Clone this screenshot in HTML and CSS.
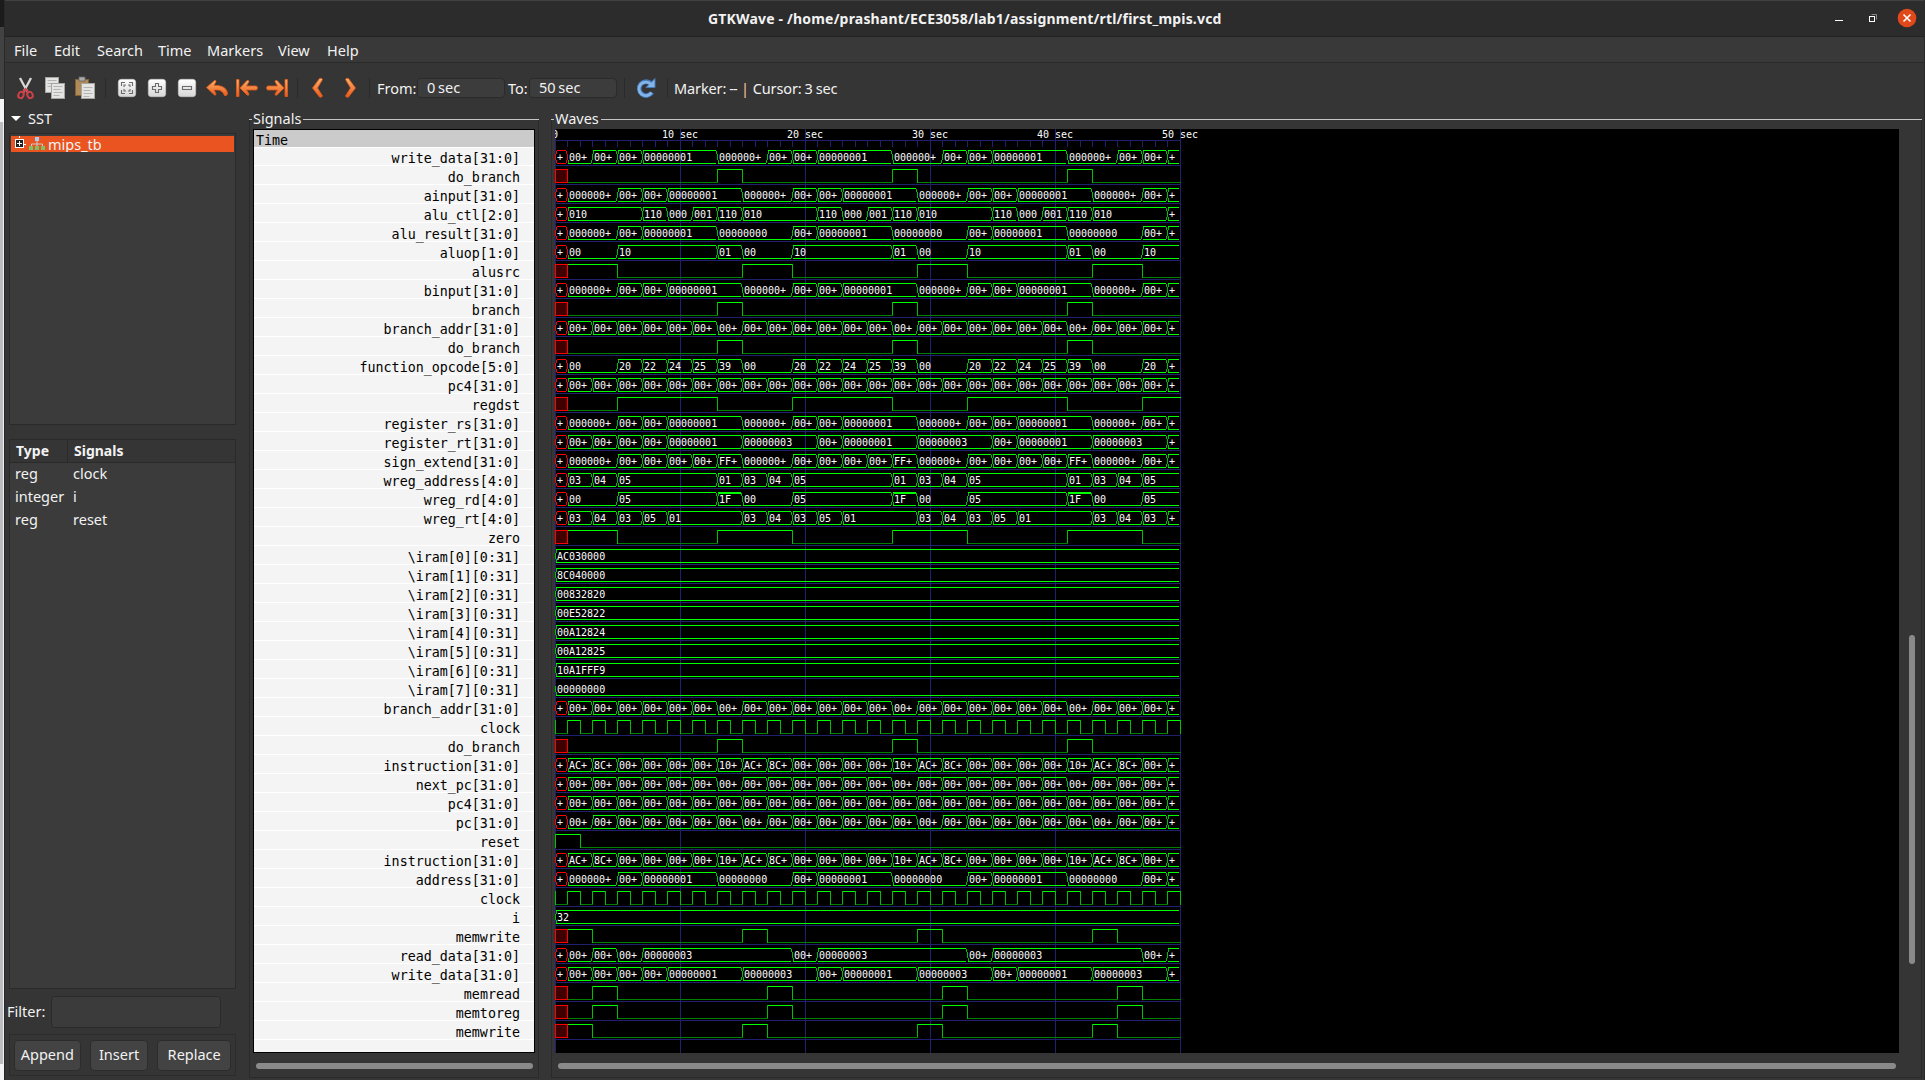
FILE: index.html
```html
<!DOCTYPE html>
<html lang="en">
<head>
<meta charset="utf-8">
<title>GTKWave</title>
<link rel="stylesheet" href="styles.css">
</head>
<body>
<div class="desktop-edge"><i class="edge-dark"></i><i class="edge-mid"></i><i class="edge-light"></i><i class="edge-grey"></i><i class="edge-light edge-end"></i></div>
<div class="window">
  <header class="titlebar">
    <h1>GTKWave - /home/prashant/ECE3058/lab1/assignment/rtl/first_mpis.vcd</h1>
    <svg class="controls" width="100" height="36" viewBox="0 0 100 36">
      <path d="M10 19.5h8" stroke="#fff"/>
      <path d="M46.500 13.500h5v5" fill="none" stroke="#888"/>
      <rect x="44.500" y="15.500" width="5" height="5" fill="none" stroke="#fff"/>
      <circle cx="82" cy="17" r="9.300" fill="#e2491a"/>
      <path d="M78.500 13.500l7 7m0-7l-7 7" stroke="#fff" stroke-width="1.600"/>
    </svg>
  </header>
  <nav class="menubar"><span class="m1">File</span><span class="m2">Edit</span><span class="m3">Search</span><span class="m4">Time</span><span class="m5">Markers</span><span class="m6">View</span><span class="m7">Help</span></nav>
  <div class="toolbar">
    <svg class="icons" width="360" height="30" viewBox="5 73 360 30">
      <defs>
        <linearGradient id="amber" x1="0" y1="0" x2="0" y2="1"><stop offset="0" stop-color="#fbb26a"/><stop offset="1" stop-color="#ea5a1c"/></linearGradient>
        <linearGradient id="paper" x1="0" y1="0" x2="0" y2="1"><stop offset="0" stop-color="#fff"/><stop offset="1" stop-color="#d6d6d6"/></linearGradient>
      </defs>
      <path d="M20 78l7.500 14M31 78l-7.500 14" stroke="#d8d8d4" stroke-width="2.300"/>
      <g fill="none" stroke="#cf4048" stroke-width="2"><ellipse cx="21" cy="95" rx="2.600" ry="3.200" transform="rotate(25 21 95)"/><ellipse cx="30" cy="95" rx="2.600" ry="3.200" transform="rotate(-25 30 95)"/><path d="M23 92l2.500-3 2.500 3"/></g>
      <g fill="#e4e4e2" stroke="#a5a5a1"><rect x="45.500" y="77.500" width="13" height="15"/><path d="M47.500 80.500h9m-9 3h8m-8 3h4" stroke="#b4b4b0"/><rect x="51.500" y="83.500" width="13" height="15"/><path d="M53.500 86.500h9m-9 3h7m-7 3h9m-9 3h6" stroke="#b4b4b0"/></g>
      <rect x="75.500" y="79.500" width="13" height="16" fill="#b08a58" stroke="#806030"/><rect x="79" y="77" width="6" height="4" fill="#aaa" stroke="#666" stroke-width=".8"/>
      <rect x="81.500" y="83.500" width="13" height="15" fill="#e4e4e2" stroke="#a5a5a1"/><path d="M83.500 87.500h9m-9 3h7m-7 3h9m-9 3h6" stroke="#b4b4b0"/>
      <path d="M105.500 78v20M297.500 78v20" stroke="#2a2a2a"/>
      <g fill="url(#paper)" stroke="#c8c8c8" stroke-width=".6"><rect x="118.300" y="79.300" width="17.400" height="17.400" rx="3"/><rect x="148.300" y="79.300" width="17.400" height="17.400" rx="3"/><rect x="178.300" y="79.300" width="17.400" height="17.400" rx="3"/></g>
      <g fill="none" stroke="#6c6c68" stroke-width="1.100">
        <path d="M121.500 86v-3.500h3.500M129 82.500h3.500v3.500M132.500 90v3.500h-3.500M125 93.500h-3.500v-3.500M124 87v-2h2M128 85h2v2M130 89v2h-2M126 91h-2v-2"/>
        <path d="M155.500 83.500h3v3h3v3h-3v3h-3v-3h-3v-3h3z"/><rect x="182.500" y="86.500" width="9" height="3"/>
      </g>
      <g fill="url(#amber)" stroke="#e2591b" stroke-width=".8" stroke-linejoin="round">
        <path d="M206.500 87.500l8-7q1.500-.5 1.500 1l-2 4h4q9 1 9.500 8.500-1 2.500-3 1.500-2-5.500-7-5.500h-3.500l2 4q0 1.500-1.500 1z"/>
        <path d="M236.500 79.500h2.500v17h-2.500zM240 88l7-7.500q2-.5 2 1l-2.500 4.500h10q2 2 0 4h-10l2.500 4q0 2-2 1z"/>
        <path d="M287.500 79.500h-2.500v17h2.500zM284 88l-7-7.500q-2-.5-2 1l2.500 4.500h-10q-2 2 0 4h10l-2.500 4q0 2 2 1z"/>
        <path d="M312.500 88l7-9.500q2-1 3 1l-5 8.500 5 8q-1 2-3 1z"/>
        <path d="M355.500 88l-7-9.500q-2-1-3 1l5 8.500-5 8q1 2 3 1z"/>
      </g>
    </svg>
    <i class="sep"></i>
    <label class="from">From:</label><span class="entry e1">0 sec</span>
    <label class="to">To:</label><span class="entry e2">50 sec</span>
    <i class="sep s2"></i>
    <svg class="reload" width="22" height="22" viewBox="0 0 22 22"><path d="M17 15.500a7 7 0 1 1-1-9" fill="none" stroke="#4679b8" stroke-width="4.600"/><path d="M20 1.500v9h-9z" fill="#83b4e8" stroke="#4679b8"/><path d="M16.500 15.500a6.800 6.800 0 1 1-.5-8" fill="none" stroke="#83b4e8" stroke-width="2.800"/></svg>
    <i class="sep s3"></i>
    <span class="marker">Marker: <u>--</u> <b>|</b> Cursor: 3 sec</span>
  </div>
  <main class="content">
    <aside class="sidebar">
      <div class="sst"><i class="arrow"></i>SST</div>
      <div class="tree">
        <div class="selected">
          <svg width="34" height="17" viewBox="11 136 34 17"><path d="M19.500 135v3M24 144.500h2" stroke="#fff"/><rect x="15.500" y="139.500" width="8" height="8" fill="#222" stroke="#fff"/><path d="M17 143.500h5M19.500 141v5" stroke="#fff"/><path d="M37 141v3M31.500 147v-3h11v3M37 144v3" fill="none" stroke="#ccc"/><rect x="35" y="137" width="4" height="4" fill="#a9cff5"/><path d="M29 146h4v4h-4zM35 146h4v4h-4zM41 146h4v4h-4z" fill="#7cc264"/></svg><span>mips_tb</span>
        </div>
      </div>
      <div class="types">
        <div class="head"><span>Type</span><span>Signals</span></div>
        <div class="line"><span>reg</span><span>clock</span></div>
        <div class="line"><span>integer</span><span>i</span></div>
        <div class="line"><span>reg</span><span>reset</span></div>
      </div>
      <div class="filter"><label>Filter:</label><span class="field"></span></div>
      <div class="buttons"><span class="btn b1">Append</span><span class="btn b2">Insert</span><span class="btn b3">Replace</span></div>
    </aside>
    <section class="frame signals">
      <div class="legend"><span>Signals</span></div>
      <div class="names"><div class="time">Time</div><div id="names"></div></div>
      <div class="hbar"></div>
    </section>
    <section class="frame waves">
      <div class="legend"><span>Waves</span></div>
      <div class="wave-row"><svg id="waves" width="1344" height="924"></svg><div class="vbar"></div></div>
      <div class="hbar"></div>
    </section>
  </main>
</div>
<script src="waves.js"></script>
</body>
</html>
```

FILE: styles.css
```css
* { box-sizing: border-box; }
body { margin: 0; width: 1925px; height: 1080px; overflow: hidden; display: flex; background: #353535; color: #f2f2f2; font: 14.500px "Noto Sans", "Open Sans", sans-serif; }
i, label { font-style: normal; display: block; }
span { white-space: nowrap; }
.desktop-edge { width: 5px; height: 1080px; display: flex; flex-direction: column; border-right: 1px solid #282828; }
.edge-dark { height: 27px; background: #1b1b1b; }
.edge-mid { height: 72px; background: #424242; }
.edge-light { height: 23px; background: #f4f4f6; }
.edge-grey { flex: 1; background: #bdbdc0; border-right: 1px solid #f0f0f0; }
.edge-end { height: 16px; }
.window { width: 1920px; height: 1080px; display: flex; flex-direction: column; border-right: 1px solid #2a2a2a; }
.titlebar { height: 37px; background: #2c2c2c; border-top: 1px solid #414141; border-bottom: 1px solid #222; display: flex; align-items: center; padding-left: 703px; justify-content: space-between; }
.titlebar h1 { margin: 0; font-size: 14px; font-weight: 700; white-space: nowrap; letter-spacing: .18px; }
.controls { margin-right: -1px; }
.menubar { height: 26px; background: #393939; border-bottom: 1px solid #2a2a2a; display: flex; align-items: center; padding-left: 9px; }
.m1 { width: 40px; } .m2 { width: 43px; } .m3 { width: 61px; } .m4 { width: 49px; } .m5 { width: 71px; } .m6 { width: 49px; }
.toolbar { height: 50px; display: flex; align-items: center; }
.sep { width: 1px; height: 20px; background: #2a2a2a; margin-left: 4px; }
.from { width: 40px; margin: 0 0 1px 7px; }
.entry { height: 20px; line-height: 16px; width: 88px; border: 1px solid #2a2a2a; border-radius: 4px; background: #3c3c3c; padding-left: 9px; word-spacing: -1px; }
.to { width: 21px; margin: 0 0 1px 3px; }
.s2 { margin-left: 7px; }
.reload { margin: 0 10px; }
.s3 { margin-left: 0; }
.marker { margin: 0 0 1px 6px; letter-spacing: -.12px; word-spacing: -.7px; }
.marker b { font-weight: 400; color: #ffc9a0; margin: 0 1px; }
.marker u { text-decoration: none; letter-spacing: -.8px; }
.content { height: 967px; display: flex; }
.sidebar { width: 244px; padding: 0 0 0 4px; display: flex; flex-direction: column; }
.sst { height: 20px; display: flex; align-items: center; padding: 0 0 10px 2px; }
.arrow { border: 5px solid transparent; border-top-color: #fff; border-bottom: 0; margin-right: 7px; }
.tree { width: 227px; height: 292px; background: #3b3b3b; border: 1px solid #2a2a2a; padding: 2px 1px; }
.selected { height: 16px; background: #e95420; display: flex; overflow: hidden; line-height: 16px; }
.selected span { margin-left: 3px; }
.types { margin-top: 14px; width: 227px; height: 550px; background: #3b3b3b; border: 1px solid #2a2a2a; }
.head { height: 23px; background: #353535; border-bottom: 1px solid #2a2a2a; display: flex; line-height: 21px; font-weight: 700; font-size: 14px; }
.head span { width: 58px; padding-left: 6px; border-right: 1px solid #2a2a2a; }
.head span + span { border: 0; }
.line { height: 23px; line-height: 21px; display: flex; }
.line span { width: 58px; padding-left: 5px; }
.filter { height: 32px; margin: 7px 0 0 -2px; display: flex; align-items: center; }
.filter label { width: 44px; margin-bottom: 2px; }
.field { width: 170px; height: 32px; background: #3b3b3b; border: 1px solid #2a2a2a; border-radius: 4px; }
.buttons { width: 227px; height: 42px; margin-top: 6px; border: 1px solid #2c2c2c; padding: 5px 4px; display: flex; }
.btn { height: 31px; line-height: 27px; background: #434343; border: 1px solid #2c2c2c; border-radius: 4px; text-align: center; }
.b1 { width: 67px; } .b2 { width: 59px; margin-left: 9px; } .b3 { width: 74px; margin-left: 9px; }
.frame { margin-top: 6px; height: 959px; border: 1px solid #2a2a2a; border-top: 0; }
.signals { width: 290px; }
.waves { width: 1371px; margin-left: 12px; }
.legend { height: 10px; display: flex; margin: 0 -1px; }
.legend::before { content: ""; width: 3px; border-top: 1px solid #c4c4c4; }
.legend::after { content: ""; flex: 1; border-top: 1px solid #c4c4c4; }
.legend span { padding: 0 2px 0 1px; line-height: 20px; margin-top: -11px; height: 20px; }
.names { margin-left: 3px; width: 282px; height: 924px; border: 1px solid #000; background: #f4f4f4; color: #000; font: 13.330px/19px "DejaVu Sans Mono", monospace; }
.time { height: 18px; padding-left: 2px; background: #cbcbcb; border-bottom: 1px solid #fff; line-height: 21px; }
.name { height: 19px; border-bottom: 1px solid #fff; text-align: right; padding-right: 14px; white-space: pre; line-height: 24px; }
.name:first-child { height: 18px; line-height: 22px; }
.hbar { height: 6px; border-radius: 3px; background: #8a8a8a; margin: 10px 6px 0 6px; }
.signals .hbar { width: 277px; }
.waves .hbar { width: 1338px; }
.wave-row { display: flex; padding-left: 3px; }
#waves { background: #000; display: block; overflow: hidden; font: 10px "DejaVu Sans Mono", monospace; shape-rendering: crispEdges; }
#waves text { fill: #fff; white-space: pre; }
#waves path { fill: none; stroke-width: 1; }
#waves .grid { stroke: #20206f; }
#waves .hi { stroke: #00ff00; }
#waves .edge { stroke: #00c000; }
#waves .low { stroke: #008000; }
#waves .undef { stroke: #ff0000; }
#waves .undef-fill { fill: #400000; stroke: #ff0000; }
.vbar { width: 6px; height: 329px; border-radius: 3px; background: #8a8a8a; margin: 506px 0 0 10px; }
```

FILE: waves.js
```js
const END = 50, PERIOD = 14, H = 924;
const X = t => Math.floor(t * 12.5);
const hex = n => n.toString(16).toUpperCase().padStart(8, '0');

// Repeats one program loop of "offset:value" changes until the end of the trace.
function loop(spec) {
  const out = [];
  for (let base = 1; base < END; base += PERIOD)
    for (const item of spec.split(' ')) {
      const [o, v] = item.split(':'), t = base + Number(o);
      if (t < END && !(out.length && out[out.length - 1].v === v)) out.push({ t, v });
    }
  return out;
}
const words = list => loop(list.map((n, i) => i * 2 + ':' + hex(n)).join(' '));
const vec = spec => ({ segs: loop(spec), undef: true });
const seq = list => ({ segs: words(list), undef: true });
const constant = v => ({ segs: [{ t: 0, v }] });
const bit = spec => ({ bits: loop(spec), undef: true });

const branch = bit('0:0 12:1');
const operand = vec('0:00000000 4:00000003 6:00000002 8:00000001');
const result = vec('0:00000000 4:00000003 6:00000001 12:00000000');
// The rt register keeps 3 for three cycles after the first pass of the loop.
const rt = { undef: true, segs: [[1, 3], [3, 4], [5, 5], [7, 2], [9, 1], [15, 3], [21, 2], [23, 1],
  [29, 3], [35, 2], [37, 1], [43, 3], [49, 2]].map(([t, n]) => ({ t, v: hex(n) })) };
const branchAddr = seq([16, 20, 0x20a0, 0x20b0, 0x20c0, 0x20d0, 0]);
const nextPc = seq([4, 8, 12, 16, 20, 24, 0]);
const pc4 = seq([4, 8, 12, 16, 20, 24, 28]);
const pc = seq([0, 4, 8, 12, 16, 20, 24]);
const instruction = seq([0xAC030000, 0x8C040000, 0x00832820, 0x00E52822, 0x00A12824, 0x00A12825, 0x10A1FFF9]);
const writeBit = bit('0:1 2:0');
const readBit = bit('0:0 2:1 4:0');
const clock = { bits: [{ t: 0, v: '0' }], startEdge: true };
for (let t = 1; t < END; t++) clock.bits.push({ t, v: String(t % 2) });
clock.bits.push({ t: END, v: '0' });
const writeData = { undef: true, segs: [
  { t: 1, v: '00000000' }, { t: 3, v: '00000004' }, { t: 5, v: '00000003' }, { t: 7, v: '00000001' }] };
for (const b of [13, 27, 41]) for (const [o, v] of [[0, 0], [4, 4], [6, 3], [8, 1]])
  if (b + o < END) writeData.segs.push({ t: b + o, v: hex(v) });
const readData = { undef: true, segs: [
  { t: 1, v: hex(0) }, { t: 3, v: hex(4) }, { t: 5, v: hex(0) }, { t: 7, v: hex(3) }] };
for (const b of [19, 33, 47]) readData.segs.push({ t: b, v: hex(0) }, { t: b + 2, v: hex(3) });

const traces = [
  ['write_data[31:0]', writeData], ['do_branch', branch], ['ainput[31:0]', operand],
  ['alu_ctl[2:0]', vec('0:010 6:110 8:000 10:001 12:110')], ['alu_result[31:0]', result],
  ['aluop[1:0]', vec('0:00 4:10 12:01')], ['alusrc', bit('0:1 4:0')], ['binput[31:0]', operand],
  ['branch', branch], ['branch_addr[31:0]', branchAddr], ['do_branch', branch],
  ['function_opcode[5:0]', vec('0:00 4:20 6:22 8:24 10:25 12:39')], ['pc4[31:0]', pc4],
  ['regdst', bit('0:0 4:1 12:0')], ['register_rs[31:0]', operand], ['register_rt[31:0]', rt],
  ['sign_extend[31:0]', vec('0:00000000 4:00002820 6:00002822 8:00002824 10:00002825 12:FFFFFFF9')],
  ['wreg_address[4:0]', vec('0:03 2:04 4:05 12:01')], ['wreg_rd[4:0]', vec('0:00 4:05 12:1F')],
  ['wreg_rt[4:0]', vec('0:03 2:04 4:03 6:05 8:01')], ['zero', bit('0:1 4:0 12:1')],
  ...['AC030000', '8C040000', '00832820', '00E52822', '00A12824', '00A12825', '10A1FFF9', '00000000']
    .map((v, i) => ['\\iram[' + i + '][0:31]', constant(v)]),
  ['branch_addr[31:0]', branchAddr], ['clock', clock], ['do_branch', branch],
  ['instruction[31:0]', instruction], ['next_pc[31:0]', nextPc], ['pc4[31:0]', pc4], ['pc[31:0]', pc],
  ['reset', { bits: [{ t: 0, v: '1' }, { t: 2, v: '0' }], startEdge: true }],
  ['instruction[31:0]', instruction], ['address[31:0]', result], ['clock', clock], ['i', constant('32')],
  ['memwrite', writeBit], ['read_data[31:0]', readData], ['write_data[31:0]', rt],
  ['memread', readBit], ['memtoreg', readBit], ['memwrite', writeBit]
];

const p = { grid: '', hi: '', edge: '', low: '', undef: '', 'undef-fill': '' };
let labels = '';
const hline = (k, x1, x2, y) => { p[k] += `M${x1} ${y + .5}H${x2}`; };
const text = (x, y, s) => { labels += `<text x="${x}" y="${y}">${s}</text>`; };
const isZero = v => /^0+$/.test(v);

hline('grid', 0, 626, 11);
for (let t = 0; t <= END; t++) p.grid += `M${X(t) + .5} ${t % 10 ? 11 : 0}V${t % 10 ? 18 : H}`;
text(-3, 9, '0');
for (let t = 10; t <= END; t += 10) text(X(t) - 18, 9, t + ' sec');

traces.forEach(([, tr], row) => {
  const top = 21 + 19 * row, bot = top + 13;
  hline('grid', 0, 626, bot + 2);
  if (tr.bits) {
    if (tr.startEdge) p.edge += `M.5 ${top}V${bot + 1}`;
    tr.bits.forEach((b, i) => {
      const x = X(b.t), x2 = X(i + 1 < tr.bits.length ? tr.bits[i + 1].t : END);
      if (i) p.edge += `M${x + .5} ${top}V${bot + 1}`;
      hline(b.v === '1' ? 'hi' : 'low', x + 1, x2 + 1, b.v === '1' ? top : bot);
    });
    if (tr.undef) p['undef-fill'] += `M.5 ${top + .5}H12.5V${bot + .5}H.5Z`;
    return;
  }
  if (tr.undef) {
    hline('undef', 2, 11, top); hline('undef', 2, 11, bot);
    p.undef += `M1.500 ${top + 1}v3M.5 ${top + 4}v6M1.500 ${bot - 3}v3M11.500 ${top + 1}v3M12.500 ${top + 4}v6M11.500 ${bot - 3}v3`;
    text(2, top + 11, '+');
  }
  tr.segs.forEach((s, i) => {
    const x = X(s.t), x2 = X(i + 1 < tr.segs.length ? tr.segs[i + 1].t : END), z = isZero(s.v);
    const first = i === 0, prevZero = !first && isZero(tr.segs[i - 1].v);
    if (first) {
      p.edge += `M${x + .5} ${top + 4}v6M${x + 1.5} ${top + 10}v3`;
      if (!z) p.edge += `M${x + 1.5} ${top + 1}v3`;
    } else {
      p.edge += `M${x + .5} ${top + 4}v6`;
      if (!z) p.edge += `M${x + 1.5} ${top + 1}v3`;
      if (!prevZero) p.edge += `M${x - .5} ${top + 1}v3`;
      if (!prevZero || z) p.edge += `M${x + 1.5} ${top + 10}v3`;
      if (prevZero || !z) p.edge += `M${x - .5} ${top + 10}v3`;
    }
    if (!z) hline('hi', x + 1, x2 - 1, top);
    if (s.v === '1F') hline('hi', x + 1, x2 - 1, top + 1);
    hline('hi', x + 1, x2 - 1, bot);
    const room = Math.floor((x2 - x - 3) / 6);
    text(x + 2, top + 11, s.v.length <= room ? s.v : s.v.slice(0, Math.max(0, room - 1)) + '+');
  });
});

document.getElementById('names').innerHTML = traces.map(([n]) => `<div class="name">${n}</div>`).join('');
document.getElementById('waves').innerHTML =
  Object.entries(p).map(([k, d]) => `<path class="${k}" d="${d}"/>`).join('') + labels;
```
